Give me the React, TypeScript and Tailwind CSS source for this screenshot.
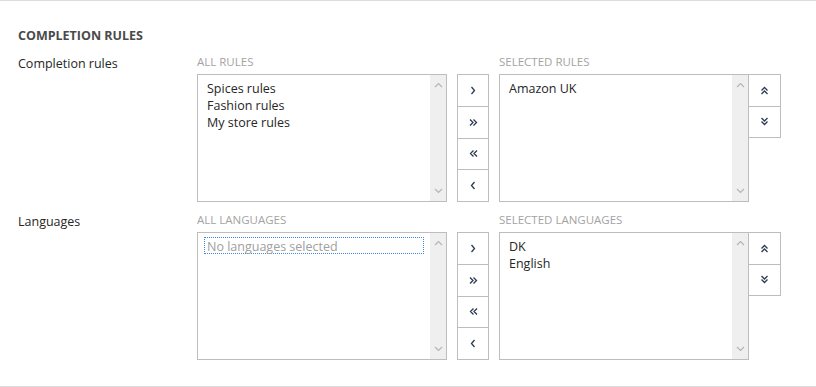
import React from "react";

const font = { fontFamily: '"Open Sans", "Noto Sans", sans-serif' };

function Chevron({ dir }: { dir: "r" | "rr" | "l" | "ll" | "uu" | "dd" }) {
  const stroke = "#2b3a55";
  if (dir === "r")
    return (
      <svg width="6" height="9" viewBox="0 0 6 9">
        <path d="M1.5 1 L4.5 4.5 L1.5 8" fill="none" stroke={stroke} strokeWidth="1.3" />
      </svg>
    );
  if (dir === "l")
    return (
      <svg width="6" height="9" viewBox="0 0 6 9">
        <path d="M4.5 1 L1.5 4.5 L4.5 8" fill="none" stroke={stroke} strokeWidth="1.3" />
      </svg>
    );
  if (dir === "rr")
    return (
      <svg width="9" height="9" viewBox="0 0 9 9">
        <path d="M1 1.5 L4 4.5 L1 7.5 M4.5 1.5 L7.5 4.5 L4.5 7.5" fill="none" stroke={stroke} strokeWidth="1.3" />
      </svg>
    );
  if (dir === "ll")
    return (
      <svg width="9" height="9" viewBox="0 0 9 9">
        <path d="M8 1.5 L5 4.5 L8 7.5 M4.5 1.5 L1.5 4.5 L4.5 7.5" fill="none" stroke={stroke} strokeWidth="1.3" />
      </svg>
    );
  if (dir === "uu")
    return (
      <svg width="9" height="9" viewBox="0 0 9 9">
        <path d="M1.5 4.5 L4.5 1.5 L7.5 4.5 M1.5 8 L4.5 5 L7.5 8" fill="none" stroke={stroke} strokeWidth="1.3" />
      </svg>
    );
  return (
    <svg width="9" height="9" viewBox="0 0 9 9">
      <path d="M1.5 1 L4.5 4 L7.5 1 M1.5 4.5 L4.5 7.5 L7.5 4.5" fill="none" stroke={stroke} strokeWidth="1.3" />
    </svg>
  );
}

function ScrollArrow({ up }: { up?: boolean }) {
  return (
    <svg width="9" height="6" viewBox="0 0 9 6">
      <path
        d={up ? "M1 5 L4.5 1.5 L8 5" : "M1 1 L4.5 4.5 L8 1"}
        fill="none"
        stroke="#b5b5b5"
        strokeWidth="1.2"
      />
    </svg>
  );
}

function ListBox({
  items,
  placeholder,
}: {
  items: string[];
  placeholder?: string;
}) {
  return (
    <div className="flex h-[128px] w-[250px] border border-[#bdbdbd] bg-white">
      <div className={"flex-1 pl-[6px] pr-[6px] " + (placeholder ? "pt-[4px]" : "pt-[5px]")}>
        {placeholder ? (
          <div className="h-[17px] border border-dotted border-[#3c8be0] pl-[2px] pt-[1px] text-[12.5px] leading-[15px] text-[#a0a0a0]">
            {placeholder}
          </div>
        ) : (
          items.map((it) => (
            <div
              key={it}
              className="h-[17px] pl-[3px] text-[12.5px] leading-[17px] text-[#262626]"
            >
              {it}
            </div>
          ))
        )}
      </div>
      <div className="flex w-[16px] flex-col items-center justify-between bg-[#efefef] py-[7px]">
        <ScrollArrow up />
        <ScrollArrow />
      </div>
    </div>
  );
}

function MoveButtons() {
  const dirs: ("r" | "rr" | "ll" | "l")[] = ["r", "rr", "ll", "l"];
  return (
    <div className="ml-[10px] mt-[19px] flex h-[128px] w-[32px] flex-col border border-[#bdbdbd] bg-white">
      {dirs.map((d, i) => (
        <div
          key={d}
          className={
            "flex flex-1 items-center justify-center " +
            (i > 0 ? "border-t border-[#bdbdbd]" : "")
          }
        >
          <Chevron dir={d} />
        </div>
      ))}
    </div>
  );
}

function OrderButtons() {
  return (
    <div className="mt-[19px] flex h-[64px] w-[32px] flex-col border border-l-0 border-[#bdbdbd] bg-white">
      <div className="flex flex-1 items-center justify-center">
        <Chevron dir="uu" />
      </div>
      <div className="flex flex-1 items-center justify-center border-t border-[#bdbdbd]">
        <Chevron dir="dd" />
      </div>
    </div>
  );
}

function Caption({ children }: { children: React.ReactNode }) {
  return (
    <div className="mb-[5px] h-[14px] text-[11.5px] uppercase leading-[14px] text-[#a3a3a3]">
      {children}
    </div>
  );
}

function Row({
  label,
  leftCaption,
  rightCaption,
  leftItems,
  rightItems,
  placeholder,
  className,
}: {
  label: string;
  leftCaption: string;
  rightCaption: string;
  leftItems: string[];
  rightItems: string[];
  placeholder?: string;
  className?: string;
}) {
  return (
    <div className={"flex items-start " + (className || "")}>
      <div className="w-[179px] text-[12.5px] leading-[17px] text-[#262626]">{label}</div>
      <div>
        <Caption>{leftCaption}</Caption>
        <ListBox items={leftItems} placeholder={placeholder} />
      </div>
      <MoveButtons />
      <div className="ml-[10px]">
        <Caption>{rightCaption}</Caption>
        <ListBox items={rightItems} />
      </div>
      <OrderButtons />
    </div>
  );
}

export default function App() {
  return (
    <div
      style={font}
      className="box-border h-[387px] w-[816px] border-y border-[#dddddd] bg-white px-[18px] pt-[27px]"
    >
      <div className="mb-[11px] h-[16px] text-[12.5px] font-bold leading-[16px] text-[#4a4a4a]">
        COMPLETION RULES
      </div>
      <Row
        label="Completion rules"
        leftCaption="All rules"
        rightCaption="Selected rules"
        leftItems={["Spices rules", "Fashion rules", "My store rules"]}
        rightItems={["Amazon UK"]}
      />
      <Row
        className="mt-[11px]"
        label="Languages"
        leftCaption="All languages"
        rightCaption="Selected languages"
        leftItems={[]}
        placeholder="No languages selected"
        rightItems={["DK", "English"]}
      />
    </div>
  );
}
